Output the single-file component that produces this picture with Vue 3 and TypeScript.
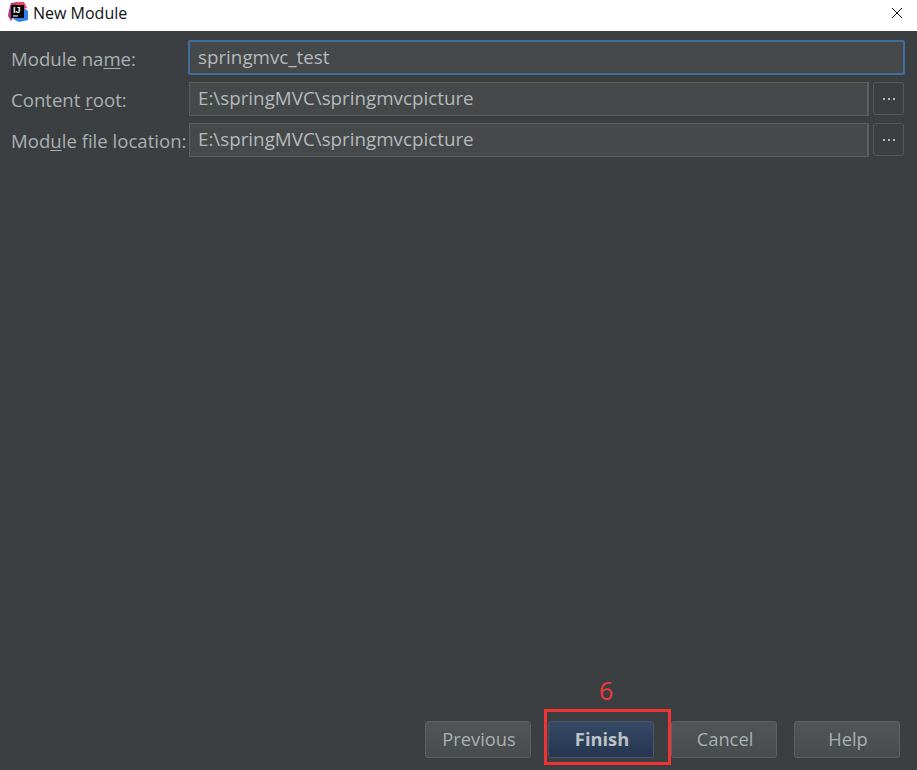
<script setup lang="ts">
interface Row { before: string; key: string; after: string; value: string; browse: boolean }
const rows: Row[] = [
  { before: 'Module na', key: 'm', after: 'e:', value: 'springmvc_test', browse: false },
  { before: 'Content ', key: 'r', after: 'oot:', value: 'E:\\springMVC\\springmvcpicture', browse: true },
  { before: 'Mod', key: 'u', after: 'le file location:', value: 'E:\\springMVC\\springmvcpicture', browse: true },
]
const buttons = ['Previous', 'Finish', 'Cancel', 'Help']
</script>

<template>
  <div class="dialog">
    <header class="titlebar">
      <svg class="logo" width="20" height="20" viewBox="0 0 20 20">
        <path d="M3 1 L10 0 L10 8 L3 19 L0 14 L1 8 Z" fill="#b5357f" />
        <path d="M7 0 L16 0 L19 6 L10 8 Z" fill="#ee4060" />
        <path d="M16 6 L20 9 L20 18 L11 20 L5 17 Z" fill="#2f80e8" />
        <rect x="3" y="3" width="13" height="13" fill="#000" />
        <text x="5" y="10.5" class="logo-text">IJ</text>
        <rect x="5" y="13.4" width="5" height="1.1" fill="#fff" />
      </svg>
      <span class="title">New Module</span>
      <svg class="close" width="12" height="12" viewBox="0 0 12 12">
        <path d="M1 1 L11 11 M11 1 L1 11" stroke="#111" stroke-width="1" fill="none" />
      </svg>
    </header>

    <main class="form">
      <template v-for="(row, i) in rows" :key="i">
        <label class="label">{{ row.before }}<u>{{ row.key }}</u>{{ row.after }}</label>
        <div class="field-line">
          <div class="input" :class="{ focused: !row.browse }">{{ row.value }}</div>
          <div v-if="row.browse" class="browse"><i></i><i></i><i></i></div>
        </div>
      </template>
    </main>

    <footer class="footer">
      <button v-for="b in buttons" :key="b" class="btn" :class="{ primary: b === 'Finish' }">
        {{ b }}
        <template v-if="b === 'Finish'">
          <span class="mark"></span>
          <span class="mark-num">6</span>
        </template>
      </button>
    </footer>
  </div>
</template>

<style scoped>
.dialog {
  width: 917px;
  height: 770px;
  display: flex;
  flex-direction: column;
  background: #3c3f41;
  font-family: "Open Sans", "Noto Sans", sans-serif;
  overflow: hidden;
}
.titlebar {
  height: 31px;
  flex: none;
  box-sizing: border-box;
  background: #fff;
  display: flex;
  align-items: center;
  padding: 0 14px 6px 8px;
  gap: 5px;
}
.logo { flex: none; margin-bottom: 1px; }
.logo-text {
  font: 700 9px "Liberation Sans", sans-serif;
  fill: #fff;
}
.title {
  font-size: 16px;
  color: #111;
  flex: 1;
}
.form {
  flex: 1;
  display: grid;
  grid-template-columns: 177px 1fr;
  grid-template-rows: 35px 34px 34px;
  row-gap: 7px;
  padding: 9px 13px 0 11px;
  align-content: start;
  align-items: center;
}
.label {
  font-size: 18.6px;
  color: #a9b0b3;
  white-space: nowrap;
  padding-bottom: 0;
  padding-top: 1px;
}
.label u { text-underline-offset: 2px; }
.field-line {
  display: flex;
  height: 100%;
  gap: 4px;
  align-items: flex-start;
}
.input {
  flex: 1;
  height: 100%;
  box-sizing: border-box;
  margin-left: 1px;
  padding: 0 8px 2px;
  display: flex;
  align-items: center;
  background: #45494a;
  border: 1px solid #5b5d5e;
  border-right-width: 2px;
  color: #b4babc;
  font-size: 18.8px;
}
.input.focused {
  margin-left: 0;
  margin-right: -1px;
  padding: 0 8px 1px;
  border: 2px solid #3f6d9e;
  border-radius: 2px;
}
.browse {
  flex: none;
  width: 31px;
  height: 33px;
  box-sizing: border-box;
  border: 1px solid #555759;
  border-radius: 3px;
  display: flex;
  align-items: center;
  justify-content: center;
  gap: 3px;
}
.browse i {
  width: 2px;
  height: 2px;
  background: #b5b8ba;
}
.footer {
  flex: none;
  height: 49px;
  box-sizing: border-box;
  padding: 0 17px 12px 0;
  display: flex;
  justify-content: flex-end;
  gap: 17px;
}
.btn {
  position: relative;
  width: 106px;
  height: 37px;
  box-sizing: border-box;
  border: 1px solid #5e6163;
  border-radius: 3px;
  background: linear-gradient(#515557, #484c4e);
  color: #a9b0b3;
  font: inherit;
  font-size: 18.3px;
  padding: 0 0 3px 2px;
}
.btn.primary {
  background: linear-gradient(#364a66, #263651);
  border-color: #4a5568;
  color: #bcc2c6;
  font-weight: 700;
}
.mark {
  position: absolute;
  left: -5px;
  top: -13px;
  width: 127px;
  height: 56px;
  box-sizing: border-box;
  border: 3px solid #f03434;
  pointer-events: none;
}
.mark-num {
  position: absolute;
  left: 50px;
  top: -48px;
  font-size: 25px;
  font-weight: 400;
  line-height: 32px;
  color: #f03a3a;
}
</style>
